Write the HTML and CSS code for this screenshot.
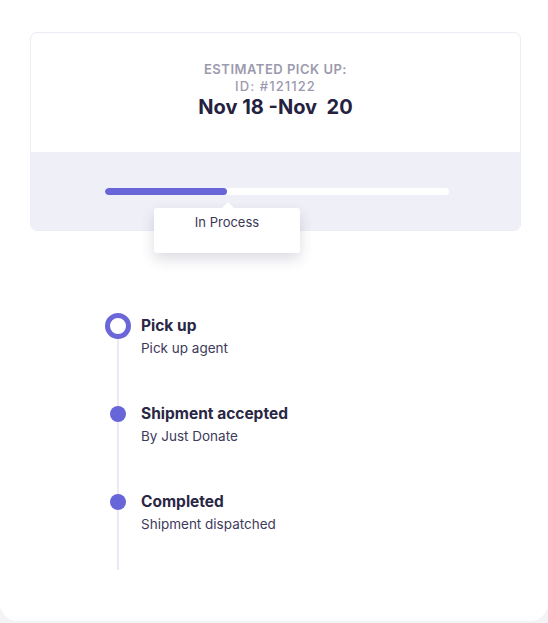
FILE: index.html
```html
<!DOCTYPE html>
<html>
<head>
<meta charset="utf-8">
<link rel="stylesheet" href="styles.css">
</head>
<body>
<div class="card">
  <div class="box">
    <div class="box-head">
      <div class="label">ESTIMATED PICK UP:</div>
      <div class="label id">ID: #121122</div>
      <div class="date">Nov 18 -Nov&nbsp; 20</div>
    </div>
    <div class="box-body">
      <div class="track"><div class="fill" style="width: 122px"></div></div>
      <div class="tip">In Process</div>
    </div>
  </div>
  <ul class="timeline">
    <li class="step">
      <span class="mark"><span class="ring"></span></span>
      <div class="txt"><div class="title">Pick up</div><div class="sub">Pick up agent</div></div>
    </li>
    <li class="step">
      <span class="mark"><span class="dot"></span></span>
      <div class="txt"><div class="title">Shipment accepted</div><div class="sub">By Just Donate</div></div>
    </li>
    <li class="step">
      <span class="mark"><span class="dot"></span></span>
      <div class="txt"><div class="title">Completed</div><div class="sub">Shipment dispatched</div></div>
    </li>
  </ul>
</div>
</body>
</html>
```
FILE: styles.css
```css
html, body { margin: 0; padding: 0; }
body {
  background: #f4f4f7;
  font-family: "Inter", "Lato", sans-serif;
  width: 548px;
  height: 623px;
  overflow: hidden;
}
.card {
  background: #ffffff;
  height: 621px;
  border-radius: 0 0 18px 18px;
  padding-top: 32px;
  box-sizing: border-box;
  position: relative;
}
.box {
  margin-left: 30px;
  width: 491px;
  border: 1.5px solid #ececf4;
  border-radius: 7px;
  box-sizing: border-box;
  background: #fff;
}
.box-head {
  height: 119px;
  padding-top: 28px;
  box-sizing: border-box;
  text-align: center;
  border-radius: 7px 7px 0 0;
}
.label {
  font-size: 13px;
  line-height: 17px;
  font-weight: 600;
  color: #9c9aae;
  letter-spacing: 0.5px;
}
.label.id { font-weight: 500; letter-spacing: 1.1px; }
.date {
  font-size: 20px;
  line-height: 24px;
  font-weight: 700;
  color: #25223f;
}
.box-body {
  position: relative;
  height: 78px;
  background: #efeff7;
  padding-top: 36px;
  box-sizing: border-box;
  border-radius: 0 0 6px 6px;
}
.track {
  margin-left: 74px;
  width: 344px;
  height: 7px;
  background: #ffffff;
  border-radius: 4px;
  overflow: hidden;
}
.fill {
  height: 100%;
  background: #6865d8;
  border-radius: 4px;
}
.tip {
  position: absolute;
  left: 123px;
  top: 56px;
  width: 146px;
  height: 45px;
  background: #fff;
  border-radius: 3px;
  box-shadow: 0 6px 14px rgba(40, 38, 80, 0.16);
  text-align: center;
  font-size: 13px;
  line-height: 17px;
  padding-top: 6px;
  box-sizing: border-box;
  color: #3a3757;
  z-index: 2;
}
.tip::before {
  content: "";
  position: absolute;
  left: 68px;
  top: -6px;
  border-left: 6px solid transparent;
  border-right: 6px solid transparent;
  border-bottom: 6px solid #fff;
}
.timeline {
  list-style: none;
  margin: 82px 0 0 105px;
  padding: 0;
  position: relative;
}
.timeline::before {
  content: "";
  position: absolute;
  left: 12px;
  top: 13px;
  width: 2px;
  height: 244px;
  background: #ebeaf4;
}
.step {
  display: flex;
  gap: 10px;
  height: 88px;
  position: relative;
}
.mark {
  width: 26px;
  height: 26px;
  display: flex;
  align-items: center;
  justify-content: center;
  flex: none;
}
.ring {
  width: 26px;
  height: 26px;
  border: 5px solid #6b67d9;
  border-radius: 50%;
  background: #fff;
  box-sizing: border-box;
}
.dot {
  width: 16px;
  height: 16px;
  background: #6865d8;
  border-radius: 50%;
}
.title {
  font-size: 15.5px;
  line-height: 26px;
  font-weight: 700;
  color: #2a2745;
}
.sub {
  font-size: 13.5px;
  line-height: 18px;
  color: #3d3a5c;
}
```
